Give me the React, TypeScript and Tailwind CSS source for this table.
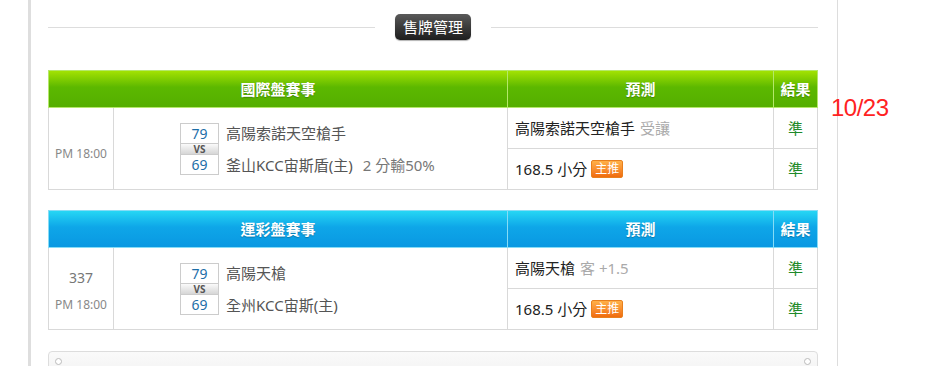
import React from 'react'

type Pick = { main: string; note?: string; hot?: boolean; result: string }

interface Game {
  title: string
  tone: 'green' | 'blue'
  code?: string
  time: string
  home: string
  away: string
  extra?: string
  picks: Pick[]
}

const games: Game[] = [
  {
    title: '國際盤賽事',
    tone: 'green',
    time: 'PM 18:00',
    home: '高陽索諾天空槍手',
    away: '釜山KCC宙斯盾(主)',
    extra: '2 分輸50%',
    picks: [
      { main: '高陽索諾天空槍手', note: '受讓', result: '準' },
      { main: '168.5 小分', hot: true, result: '準' },
    ],
  },
  {
    title: '運彩盤賽事',
    tone: 'blue',
    code: '337',
    time: 'PM 18:00',
    home: '高陽天槍',
    away: '全州KCC宙斯(主)',
    picks: [
      { main: '高陽天槍', note: '客 +1.5', result: '準' },
      { main: '168.5 小分', hot: true, result: '準' },
    ],
  },
]

function ScoreBox() {
  return (
    <div className="w-[39px] border border-[#cccccc] text-center text-[14px] text-[#1d6ea8]">
      <div className="h-[19px] leading-[19px]">79</div>
      <div className="h-[12px] border-y border-[#cccccc] bg-linear-to-b from-[#fafafa] to-[#d6d6d6] text-[10px] font-bold leading-[10px] text-[#555]">
        VS
      </div>
      <div className="h-[19px] leading-[19px]">69</div>
    </div>
  )
}

function GameTable({ game }: { game: Game }) {
  const green = game.tone === 'green'
  const head = green
    ? 'bg-linear-to-b from-[#a2e202] via-[#5cb800] via-45% to-[#54ae00] border-[#b4e86a]'
    : 'bg-linear-to-b from-[#26d6f4] via-[#0ea6e8] via-45% to-[#0a98e2] border-[#86dcf6]'
  const th = `h-[38px] border-y border-l text-[15px] font-bold text-white [text-shadow:0_1px_1px_rgba(0,0,0,0.25)] ${head}`
  const td = 'border-l border-b border-[#d9d9d9]'

  return (
    <table className="w-[770px] table-fixed border-separate border-spacing-0">
      <colgroup>
        <col className="w-[65px]" />
        <col className="w-[394px]" />
        <col className="w-[266px]" />
        <col className="w-[45px]" />
      </colgroup>
      <thead>
        <tr>
          <th colSpan={2} className={th}>{game.title}</th>
          <th className={th}>預測</th>
          <th className={`${th} border-r`}>結果</th>
        </tr>
      </thead>
      <tbody>
        {game.picks.map((p, i) => (
          <tr key={i}>
            {i === 0 && (
              <>
                <td rowSpan={2} className={`${td} text-center align-middle`}>
                  {game.code ? (
                    <div className="pt-[4px]">
                      <div className="mb-[12px] text-[14px] leading-[16px] text-[#777]">{game.code}</div>
                      <div className="text-[12px] leading-[14px] text-[#888]">{game.time}</div>
                    </div>
                  ) : (
                    <div className="pt-[10px] text-[12px] leading-[14px] text-[#888]">{game.time}</div>
                  )}
                </td>
                <td rowSpan={2} className={`${td} align-middle`}>
                  <div className="flex items-center gap-[7px] pl-[66px]">
                    <ScoreBox />
                    <div className="flex h-[52px] flex-col justify-between text-[15px] leading-[20px] text-[#555]">
                      <div>{game.home}</div>
                      <div>
                        {game.away}
                        {game.extra && <span className="ml-[10px] text-[#777]">{game.extra}</span>}
                      </div>
                    </div>
                  </div>
                </td>
              </>
            )}
            <td className={`${td} h-[41px] pl-[7px] text-[15px] text-[#222]`}>
              <div className="flex items-center">
                <span>{p.main}</span>
                {p.note && <span className="ml-[5px] text-[#aaa]">{p.note}</span>}
                {p.hot && (
                  <span className="ml-[4px] flex h-[18px] items-center rounded-[2px] border border-[#e8801e] bg-linear-to-b from-[#ffb048] to-[#f06c0c] px-[3px] text-[12px] leading-none text-white">
                    主推
                  </span>
                )}
              </div>
            </td>
            <td className={`${td} border-r text-center text-[15px] text-[#1f8a2a]`}>{p.result}</td>
          </tr>
        ))}
      </tbody>
    </table>
  )
}

export default function App() {
  return (
    <div className="relative h-[366px] w-[931px] overflow-hidden bg-white font-['Noto_Sans','Noto_Sans_CJK_TC',sans-serif]">
      <div className="ml-[28px] h-full w-[810px] border-l-[3px] border-r border-l-[#dedede] border-r-[#dddddd] pl-[17px]">
        {/* section title */}
        <div className="flex w-[770px] items-center gap-5 pt-[14px]">
          <div className="h-px flex-1 bg-[#dddddd]" />
          <div className="h-[26px] rounded-[5px] bg-linear-to-b from-[#5a5a5a] to-[#1e1e1e] px-[8px] text-[15px] leading-[26px] text-white shadow-[0_1px_1px_rgba(0,0,0,0.3)]">
            售牌管理
          </div>
          <div className="h-px flex-1 bg-[#dddddd]" />
        </div>

        <div className="mt-[30px] flex flex-col gap-5">
          {games.map((g) => (
            <GameTable key={g.title} game={g} />
          ))}
        </div>

        {/* next panel */}
        <div className="mt-[21px] flex h-[40px] w-[770px] items-start justify-between rounded-sm border border-[#dddddd] bg-linear-to-b from-[#fafafa] to-[#eeeeee] px-[6px] pt-[6px]">
          <span className="h-[7px] w-[7px] rounded-full border border-[#bbbbbb] bg-white" />
          <span className="h-[7px] w-[7px] rounded-full border border-[#bbbbbb] bg-white" />
        </div>
      </div>

      <div className="absolute left-[831px] top-[96px] font-['Liberation_Sans',sans-serif] text-[24px] leading-none tracking-[-0.5px] text-[#ff2222]">
        10/23
      </div>
    </div>
  )
}
